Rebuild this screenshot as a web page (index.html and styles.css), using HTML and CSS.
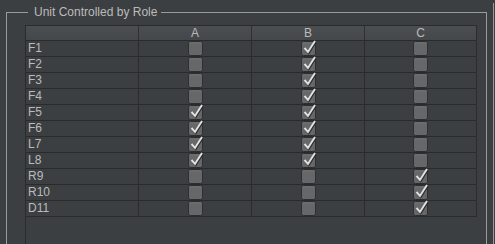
FILE: index.html
```html
<!DOCTYPE html>
<html>
<head>
<meta charset="utf-8">
<link rel="stylesheet" href="styles.css">
</head>
<body>
<div class="frame">
  <fieldset class="group">
    <legend class="group-title">Unit Controlled by Role</legend>
    <div class="scroll">
      <div class="grid" id="grid">
        <div class="hcell"></div>
        <div class="hcell">A</div>
        <div class="hcell">B</div>
        <div class="hcell last">C</div>
      </div>
    </div>
  </fieldset>
  <div class="side"></div>
</div>
<script src="app.js"></script>
</body>
</html>
```

FILE: styles.css
```css
* { box-sizing: border-box; }
html, body {
  margin: 0;
  padding: 0;
  background: #3c3f41;
  height: 244px;
  overflow: hidden;
}
body {
  font-family: "Liberation Sans", Arial, sans-serif;
  font-size: 12px;
  color: #bbbbbb;
}
.frame {
  display: flex;
  height: 244px;
  padding-left: 6px;
}
.group {
  margin: 0;
  margin-top: 4px;
  width: 481px;
  height: 240px;
  border: 1px solid #9a9a9a;
  border-bottom: none;
  padding: 5px 9px 0 18px;
  min-width: 0;
  overflow: hidden;
}
.group-title {
  margin-left: 3px;
  padding: 0 4px 0 6px;
  line-height: 16px;
  height: 16px;
  font-size: 12px;
  color: #bbbbbb;
}
.side {
  margin-left: 6px;
  margin-top: 3px;
  border-left: 1px solid #9a9a9a;
  width: 2px;
  height: 241px;
}
.scroll {
  border-left: 1px solid #2b2b2b;
  border-top: 1px solid #2b2b2b;
  width: 452px;
  height: 220px;
}
.grid {
  display: grid;
  grid-template-columns: 113px 113px 113px 111px;
  border-right: 1px solid #2b2b2b;
}
.hcell {
  height: 15px;
  line-height: 15px;
  text-align: center;
  background: linear-gradient(#4c4f51, #45484a);
  border-right: 1px solid #2e3032;
  border-bottom: 1px solid #2b2b2b;
  color: #bbbbbb;
}
.hcell.last { border-right: none; }
.cell {
  height: 16px;
  line-height: 15px;
  border-right: 1px solid #2b2b2b;
  border-bottom: 1px solid #2b2b2b;
  display: flex;
  align-items: flex-start;
  justify-content: center;
}
.cell.label {
  align-items: center;
  justify-content: flex-start;
  padding-left: 2px;
  color: #bbbbbb;
}
.cell.last { border-right: none; }
.cb { display: block; width: 15px; height: 15px; margin-top: 0; overflow: visible; }
```

FILE: app.js
```js
var rows = [
  ["F1", 0, 1, 0], ["F2", 0, 1, 0], ["F3", 0, 1, 0], ["F4", 0, 1, 0],
  ["F5", 1, 1, 0], ["F6", 1, 1, 0], ["L7", 1, 1, 0], ["L8", 1, 1, 0],
  ["R9", 0, 0, 1], ["R10", 0, 0, 1], ["D11", 0, 0, 1]
];
var grid = document.getElementById("grid");
function box(checked) {
  var s = '<svg class="cb" viewBox="0 0 15 15" width="15" height="15">' +
    '<rect x="0.5" y="0.5" width="14" height="14" rx="2" fill="#656769" stroke="#2c2e30" stroke-width="1"/>' +
    '<rect x="1.5" y="1.5" width="12" height="1" fill="#707274"/>';
  if (checked) {
    s += '<path d="M3.5 7 L7 11 L14 0" fill="none" stroke="#2a2a2a" stroke-width="2" transform="translate(0.6,1)"/>' +
         '<path d="M3.5 7 L7 11 L14 0" fill="none" stroke="#e2e2e2" stroke-width="1.9"/>';
  }
  return s + '</svg>';
}
rows.forEach(function (r) {
  var h = '<div class="cell label">' + r[0] + '</div>';
  for (var i = 1; i <= 3; i++) {
    h += '<div class="cell' + (i === 3 ? ' last' : '') + '">' + box(r[i]) + '</div>';
  }
  grid.insertAdjacentHTML("beforeend", h);
});
```
